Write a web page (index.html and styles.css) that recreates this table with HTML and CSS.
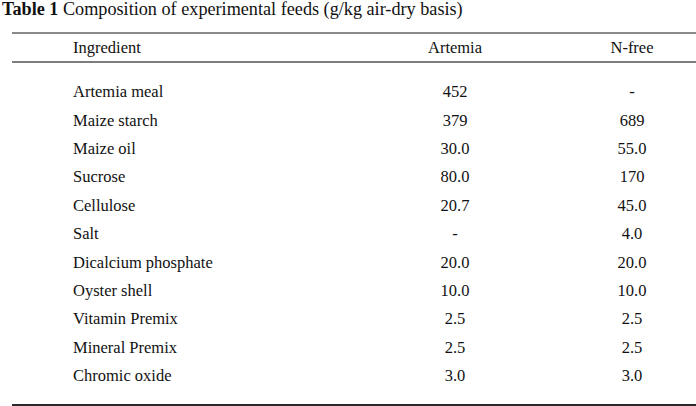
FILE: index.html
```html
<!DOCTYPE html>
<html>
<head>
<meta charset="utf-8">
<link rel="stylesheet" href="styles.css">
</head>
<body>
<div class="caption"><b>Table 1</b> Composition of experimental feeds (g/kg air-dry basis)</div>
<div class="table">
  <div class="row head">
    <div class="c1">Ingredient</div><div class="c2">Artemia</div><div class="c3">N-free</div>
  </div>
  <div class="body">
    <div class="row"><div class="c1">Artemia meal</div><div class="c2">452</div><div class="c3">-</div></div>
    <div class="row"><div class="c1">Maize starch</div><div class="c2">379</div><div class="c3">689</div></div>
    <div class="row"><div class="c1">Maize oil</div><div class="c2">30.0</div><div class="c3">55.0</div></div>
    <div class="row"><div class="c1">Sucrose</div><div class="c2">80.0</div><div class="c3">170</div></div>
    <div class="row"><div class="c1">Cellulose</div><div class="c2">20.7</div><div class="c3">45.0</div></div>
    <div class="row"><div class="c1">Salt</div><div class="c2">-</div><div class="c3">4.0</div></div>
    <div class="row"><div class="c1">Dicalcium phosphate</div><div class="c2">20.0</div><div class="c3">20.0</div></div>
    <div class="row"><div class="c1">Oyster shell</div><div class="c2">10.0</div><div class="c3">10.0</div></div>
    <div class="row"><div class="c1">Vitamin Premix</div><div class="c2">2.5</div><div class="c3">2.5</div></div>
    <div class="row"><div class="c1">Mineral Premix</div><div class="c2">2.5</div><div class="c3">2.5</div></div>
    <div class="row"><div class="c1">Chromic oxide</div><div class="c2">3.0</div><div class="c3">3.0</div></div>
  </div>
</div>
</body>
</html>
```
FILE: styles.css
```css
html, body {
  margin: 0;
  padding: 0;
  background: #fff;
}
body {
  width: 696px;
  height: 406px;
  overflow: hidden;
  font-family: "Liberation Serif", "Times New Roman", serif;
  font-size: 16.5px;
  color: #111;
}
.caption {
  padding: 0 0 0 2px;
  height: 32px;
  font-size: 18.2px;
  line-height: 19px;
}
.caption b {
  font-weight: bold;
}
.table {
  margin-left: 12px;
  width: 684px;
  border-top: 2px solid #8a8a8a;
  border-bottom: 2px solid #2a2a2a;
}
.row {
  display: grid;
  grid-template-columns: 330px 226px 128px;
  height: 28.4px;
  align-items: center;
}
.head {
  height: 27px;
  border-bottom: 2px solid #7d7d7d;
}
.body {
  padding: 15px 0 14px;
}
.c1 {
  padding-left: 61px;
}
.c2, .c3 {
  text-align: center;
}
```
